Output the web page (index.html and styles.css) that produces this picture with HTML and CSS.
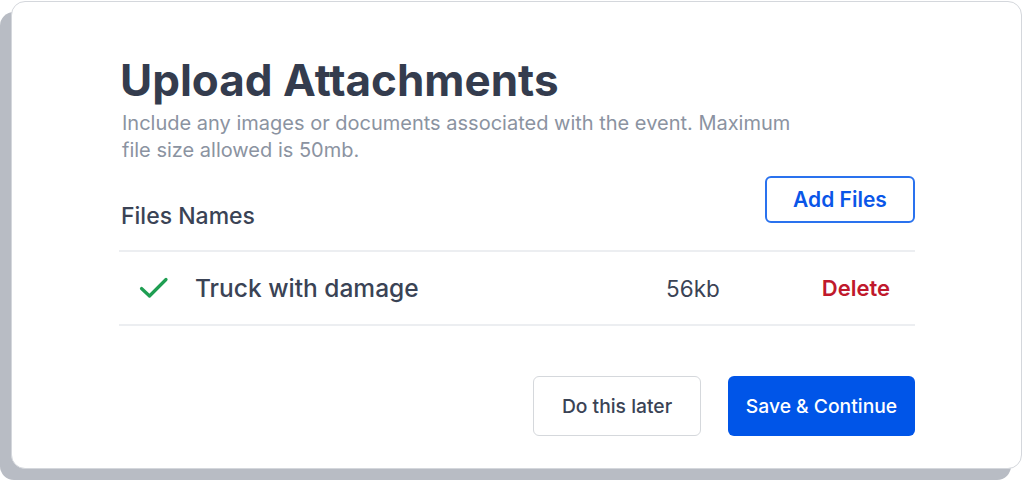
FILE: index.html
```html
<!DOCTYPE html>
<html lang="en">
<head>
    <meta charset="UTF-8">
    <title>Upload Attachments</title>
    <link rel="stylesheet" href="styles.css">
</head>
<body>
    <div class="modal">
        <h1 class="title">Upload Attachments</h1>
        <p class="subtitle">Include any images or documents associated with the event. Maximum file size allowed is 50mb.</p>

        <div class="files-header">
            <span class="files-label">Files Names</span>
            <button class="add-button">Add Files</button>
        </div>

        <div class="file-row">
            <svg class="check" width="30" height="22" viewBox="0 0 30 22">
                <path d="M2.5 11.5 L10.5 19 L27 2.5" fill="none" stroke="#1f9e52" stroke-width="3.2" stroke-linecap="round" stroke-linejoin="round"/>
            </svg>
            <span class="file-name">Truck with damage</span>
            <span class="file-size">56kb</span>
            <button class="delete-button">Delete</button>
        </div>

        <div class="footer">
            <button class="later-button">Do this later</button>
            <button class="save-button">Save &amp; Continue</button>
        </div>
    </div>
</body>
</html>
```

FILE: styles.css
```css
html, body {
    min-height: 482px;
}

body {
    margin: 0;
    padding: 1px 2px 13px 11px;
    box-sizing: border-box;
    background-color: #ffffff;
    font-family: Inter, "Noto Sans", sans-serif;
    color: #3a4355;
}

.modal {
    width: 1011px;
    height: 468px;
    box-sizing: border-box;
    background-color: #ffffff;
    border: 1px solid #d4d7dc;
    border-radius: 14px;
    box-shadow: -11px 11px 0 #b8bcc4;
    padding: 52px 106px 0 107px;
}

.title {
    margin: 0;
    font-size: 44px;
    line-height: 52px;
    font-weight: 700;
    color: #343c4e;
    padding-left: 1px;
}

.subtitle {
    margin: 4px 0 0;
    width: 670px;
    padding-left: 3px;
    font-size: 20px;
    line-height: 27px;
    color: #8b93a1;
}

.files-header {
    margin-top: 12px;
    display: flex;
    justify-content: space-between;
    align-items: flex-end;
    padding-bottom: 27px;
    border-bottom: 2px solid #eceef1;
}

.files-label {
    font-size: 23px;
    font-weight: 500;
    line-height: 22px;
    padding-left: 2px;
    margin-bottom: -4px;
}

.add-button {
    width: 150px;
    height: 47px;
    background-color: #ffffff;
    border: 2px solid #2a72ee;
    border-radius: 6px;
    color: #0a56e8;
    font-family: inherit;
    font-size: 21px;
    font-weight: 600;
    cursor: pointer;
}

.file-row {
    height: 72px;
    display: flex;
    align-items: center;
    padding-left: 20px;
    border-bottom: 2px solid #eceef1;
}

.check {
    margin-right: 26px;
}

.file-name {
    flex: 1;
    font-size: 24.5px;
    font-weight: 500;
}

.file-size {
    font-size: 22.5px;
    color: #3a4355;
    margin-right: 102px;
}

.delete-button {
    background: none;
    border: none;
    padding: 0;
    margin-right: 25px;
    color: #c0192c;
    font-family: inherit;
    font-size: 22px;
    font-weight: 600;
    cursor: pointer;
}

.footer {
    margin-top: 50px;
    display: flex;
    justify-content: flex-end;
    gap: 27px;
}

.footer button {
    height: 60px;
    border-radius: 6px;
    font-family: inherit;
    font-size: 19.3px;
    font-weight: 500;
    cursor: pointer;
}

.later-button {
    width: 168px;
    background-color: #ffffff;
    border: 1px solid #d5d8dc;
    color: #3a4355;
}

.save-button {
    width: 187px;
    background-color: #0055e8;
    border: none;
    color: #ffffff;
}
```
